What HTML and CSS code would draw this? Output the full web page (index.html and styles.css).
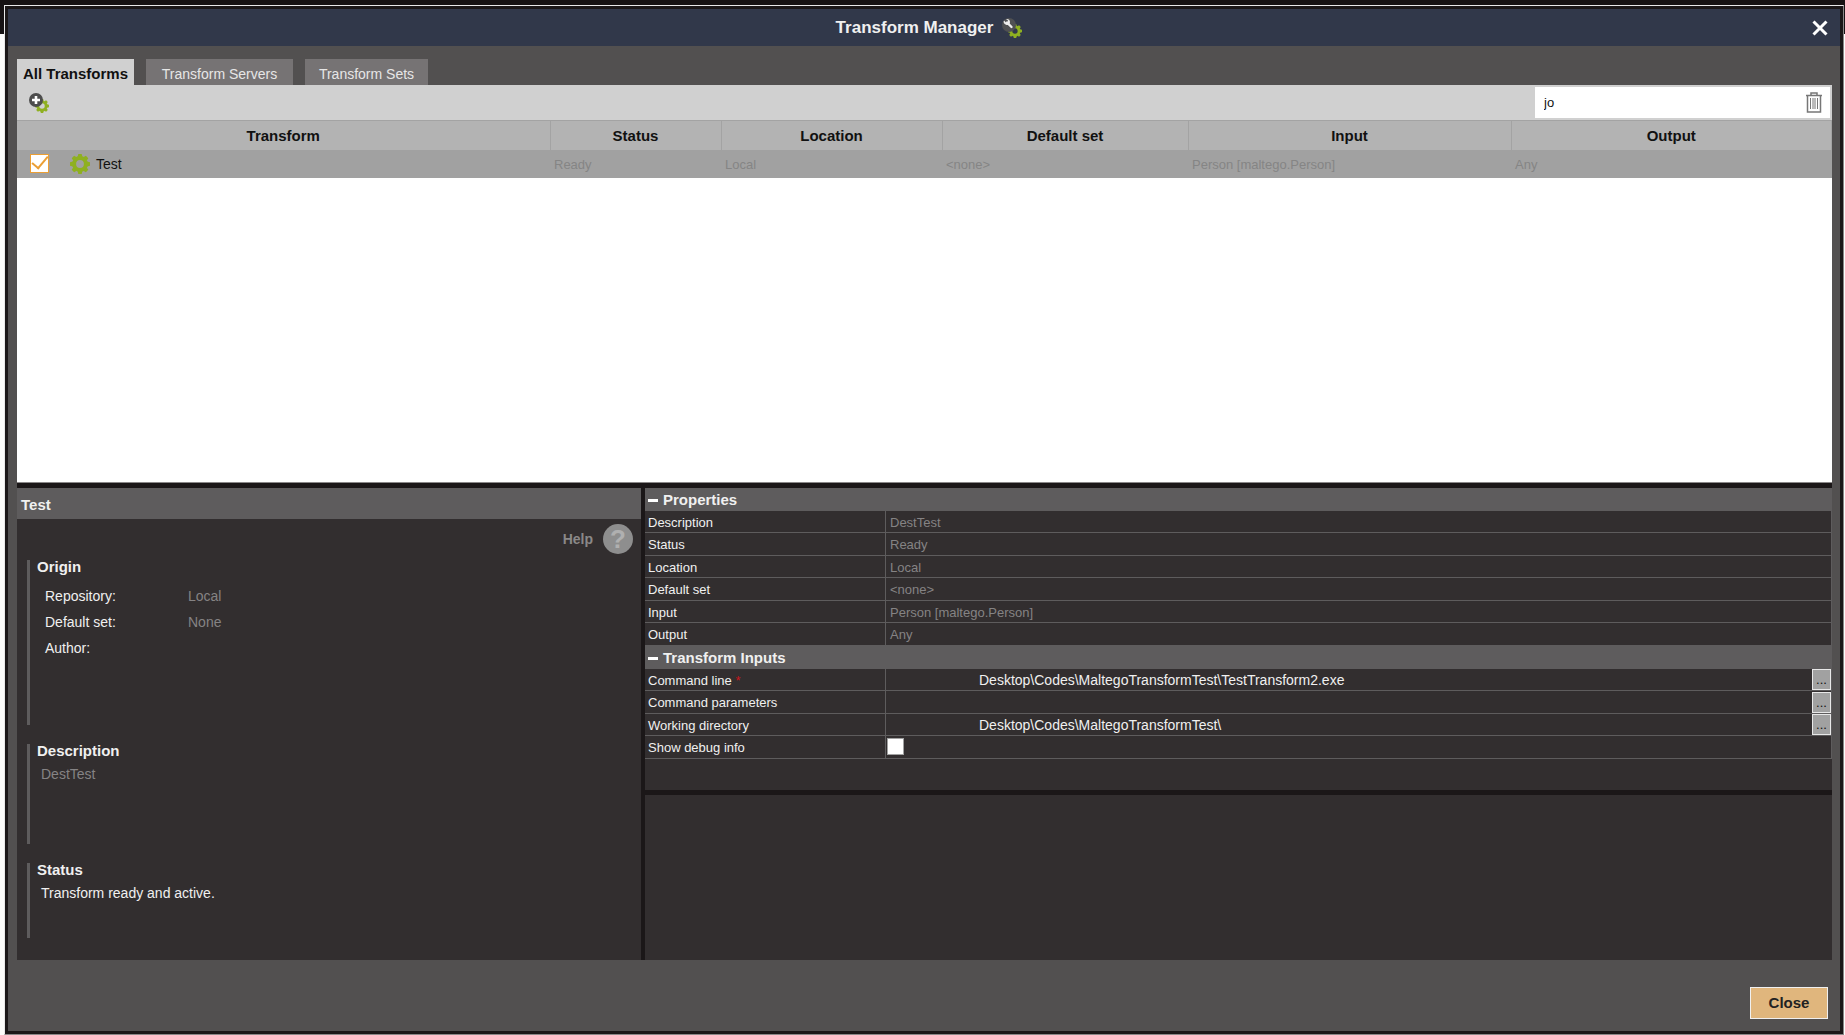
FILE: index.html
```html
<!DOCTYPE html>
<html lang="en">
<head>
<meta charset="utf-8">
<title>Transform Manager</title>
<link rel="stylesheet" href="styles.css">
</head>
<body>
<svg class="defs" aria-hidden="true">
  <symbol id="gear" viewBox="-10 -10 20 20">
    <circle r="5.9" fill="none" stroke="#8fb021" stroke-width="4"/>
    <g fill="#8fb021">
      <path id="teeth" d="M-2.4-7h4.8l-.7-3h-3.4zM-2.4 7h4.8l-.7 3h-3.4zM-7-2.4v4.8l-3-.7v-3.4zM7-2.4v4.8l3-.7v-3.4z"/>
      <use href="#teeth" transform="rotate(45)"/>
    </g>
  </symbol>
</svg>
<main class="window">
  <header class="titlebar">
    <h1 class="title">Transform Manager
      <svg class="icon" viewBox="0 0 20 20" aria-hidden="true">
        <use href="#gear" x="6" y="6" width="14" height="14"/>
        <circle cx="7" cy="7" r="7" fill="#505153"/>
        <path d="M5 4.5l4.500 4.500" stroke="#eee" stroke-width="2.4" stroke-linecap="round"/>
        <path d="M2 2.5l2 2 1.500-.5.5-1.500-2-1.500c2-.5 4 .5 4 3s-2 3.500-4 2.800S1 4 2 2.500z" fill="#eee"/>
      </svg>
    </h1>
    <button class="dismiss" type="button" aria-label="Close window">
      <svg width="16" height="16" viewBox="0 0 16 16"><path d="M1.500 1.500l13 13m0-13l-13 13" stroke="#fff" stroke-width="3"/></svg>
    </button>
  </header>

  <div class="content">
    <nav class="tabs" role="tablist">
      <button class="tab tab-active" type="button" role="tab" aria-selected="true">All Transforms</button>
      <button class="tab tab-servers" type="button" role="tab">Transform Servers</button>
      <button class="tab tab-sets" type="button" role="tab">Transform Sets</button>
    </nav>

    <section class="list">
      <div class="toolbar">
        <button class="add" type="button" aria-label="Add transform">
          <svg class="icon" viewBox="0 0 20 20">
            <use href="#gear" x="6" y="6" width="14" height="14"/>
            <circle cx="7" cy="7" r="7" fill="#4d4d4d"/>
            <path d="M7 3v8M3 7h8" stroke="#fff" stroke-width="2.600"/>
          </svg>
        </button>
        <div class="search">
          <input class="search-input" type="text" value="jo" aria-label="Filter transforms">
          <button class="clear" type="button" aria-label="Clear filter">
            <svg width="16" height="21" viewBox="0 0 16 21" fill="none" stroke="#777">
              <path d="M0 3.500h16" stroke-width="1.500"/><path d="M5 3V1h6v2M1.500 4v16h13V4" stroke-width="1.500"/>
              <path d="M4.500 6v11M7 6v11M9 6v11M11.500 6v11"/>
            </svg>
          </button>
        </div>
      </div>
      <table class="transforms">
        <colgroup><col class="c-name"><col class="c-status"><col class="c-location"><col class="c-set"><col class="c-input"><col></colgroup>
        <thead><tr><th>Transform</th><th>Status</th><th>Location</th><th>Default set</th><th>Input</th><th>Output</th></tr></thead>
        <tbody>
          <tr>
            <td class="name-cell">
              <label class="name">
                <input class="tick" type="checkbox" checked>
                <svg class="gear" aria-hidden="true"><use href="#gear"/></svg>
                Test
              </label>
            </td>
            <td>Ready</td><td>Local</td><td>&lt;none&gt;</td><td>Person [maltego.Person]</td><td>Any</td>
          </tr>
        </tbody>
      </table>
    </section>

    <div class="details">
      <section class="summary">
        <h2 class="summary-title">Test</h2>
        <div class="summary-body">
          <button class="help" type="button">Help <span class="help-mark">?</span></button>
          <section class="block origin">
            <h3 class="block-title">Origin</h3>
            <dl class="facts">
              <dt>Repository:</dt><dd>Local</dd>
              <dt>Default set:</dt><dd>None</dd>
              <dt>Author:</dt><dd></dd>
            </dl>
          </section>
          <section class="block description">
            <h3 class="block-title">Description</h3>
            <p class="block-text muted">DestTest</p>
          </section>
          <section class="block status">
            <h3 class="block-title">Status</h3>
            <p class="block-text">Transform ready and active.</p>
          </section>
        </div>
      </section>

      <div class="side">
        <section class="sheet">
          <h2 class="group">Properties</h2>
          <table class="props">
            <colgroup><col class="c-label"><col></colgroup>
            <tbody>
              <tr><th scope="row">Description</th><td>DestTest</td></tr>
              <tr><th scope="row">Status</th><td>Ready</td></tr>
              <tr><th scope="row">Location</th><td>Local</td></tr>
              <tr><th scope="row">Default set</th><td>&lt;none&gt;</td></tr>
              <tr><th scope="row">Input</th><td>Person [maltego.Person]</td></tr>
              <tr><th scope="row">Output</th><td>Any</td></tr>
            </tbody>
          </table>
          <h2 class="group">Transform Inputs</h2>
          <table class="props">
            <colgroup><col class="c-label"><col></colgroup>
            <tbody>
              <tr><th scope="row"><label for="cmd">Command line <span class="required">*</span></label></th>
                <td class="edit"><div class="field"><input id="cmd" type="text" value="Desktop\Codes\MaltegoTransformTest\TestTransform2.exe"><button type="button" aria-label="Edit command line">...</button></div></td></tr>
              <tr><th scope="row"><label for="params">Command parameters</label></th>
                <td class="edit"><div class="field"><input id="params" type="text"><button type="button" aria-label="Edit command parameters">...</button></div></td></tr>
              <tr><th scope="row"><label for="dir">Working directory</label></th>
                <td class="edit"><div class="field"><input id="dir" type="text" value="Desktop\Codes\MaltegoTransformTest\"><button type="button" aria-label="Edit working directory">...</button></div></td></tr>
              <tr><th scope="row"><label for="debug">Show debug info</label></th>
                <td class="edit"><input id="debug" class="box" type="checkbox"></td></tr>
            </tbody>
          </table>
        </section>
        <section class="notes"></section>
      </div>
    </div>
  </div>

  <footer class="footer"><button class="close" type="button">Close</button></footer>
</main>
</body>
</html>
```
FILE: styles.css
```css
* { box-sizing: border-box; }

body {
  margin: 0;
  padding: 5px 1px 0 4px;
  min-height: 100vh;
  display: flex;
  background: linear-gradient(#161213 34px, #fcfcfb 34px);
  font: 13px/16px "Liberation Sans", Arial, sans-serif;
  color: #f0f0f0;
}

h1, h2, h3, p, dl, dd { margin: 0; }
button, input { font: inherit; color: inherit; }
button { border: 0; padding: 0; background: none; }
.defs { position: absolute; width: 0; height: 0; }
.icon { display: block; width: 20px; height: 20px; }

.window {
  flex: 1;
  min-width: 0;
  display: flex;
  flex-direction: column;
  background: #525050;
  border: 1px solid #e8e8e8;
  border-right-color: #8a8888;
  border-bottom-color: #8a8888;
  outline: 3px solid #1b1718;
  outline-offset: -4px;
  padding: 3px;
}

.titlebar {
  display: grid;
  grid-template-columns: 1fr auto 1fr;
  align-items: center;
  height: 37px;
  background: #31384a;
}
.title {
  grid-column: 2;
  display: flex;
  align-items: center;
  gap: 9px;
  padding-left: 10px;
  font-size: 17px;
  line-height: 20px;
}
.dismiss { justify-self: end; margin-right: 12px; height: 16px; }
.dismiss svg { display: block; }

.content {
  flex: 1;
  display: flex;
  flex-direction: column;
  padding: 13px 8px 0 9px;
}

.tabs { display: flex; gap: 12px; }
.tab {
  height: 26px;
  padding-top: 4px;
  background: #767374;
  color: #e6e6e6;
  font-size: 14px;
}
.tab-active { width: 117px; background: #d0d0d0; color: #111; font-size: 15px; font-weight: bold; white-space: nowrap; }
.tab-servers { width: 147px; }
.tab-sets { width: 123px; }

.list {
  flex: 1;
  min-height: 200px;
  background: #fff;
  border-bottom: 1px solid #8a8888;
}
.toolbar {
  display: flex;
  align-items: center;
  justify-content: space-between;
  height: 35px;
  padding: 0 2px 0 12px;
  background: #d0d0d0;
}
.search {
  display: flex;
  align-items: center;
  width: 295px;
  height: 31px;
  padding: 0 8px;
  background: #fff;
  color: #111;
}
.search-input { flex: 1; min-width: 0; border: 0; padding: 0 1px; background: none; outline: 0; }
.clear svg { display: block; }

.transforms { width: 100%; table-layout: fixed; border-collapse: collapse; }
.c-name { width: 533px; }
.c-status { width: 171px; }
.c-location { width: 221px; }
.c-set { width: 246px; }
.c-input { width: 323px; }
.transforms th {
  height: 29px;
  padding: 1px 0 0;
  background: #b3b3b3;
  border: 0 solid #a3a3a3;
  border-width: 1px 1px 0 0;
  color: #111;
  font-size: 15px;
}
.transforms td { height: 28px; padding: 2px 0 0 4px; background: #a1a1a1; color: #858585; }
.transforms .name-cell { padding: 0 0 0 13px; }
.name { display: flex; align-items: center; color: #111; font-size: 14px; }
.tick {
  appearance: none;
  width: 19px;
  height: 19px;
  margin: 0 21px 0 0;
  border: 1px solid #eb9f35;
  background: #fff;
  display: grid;
  place-items: center;
}
.tick::before {
  content: "";
  width: 14px;
  height: 7px;
  margin-top: -7px;
  border: solid #eb9f35;
  border-width: 0 0 2px 2px;
  transform: rotate(-50deg);
}
.gear { width: 20px; height: 20px; margin-right: 6px; }

.details {
  display: grid;
  grid-template-columns: 624px 1fr;
  gap: 4px;
  padding-top: 5px;
  background: #1b1718;
}
.summary { background: #322e2f; }
.summary-title {
  height: 31px;
  padding: 1px 0 0 4px;
  background: #5e5c5d;
  font-size: 15px;
  line-height: 31px;
}
.summary-body { display: flex; flex-direction: column; padding: 5px 8px 21px 10px; }
.help {
  align-self: end;
  display: flex;
  align-items: center;
  gap: 10px;
  height: 30px;
  color: #8a8888;
  font-size: 14px;
  font-weight: bold;
}
.help-mark {
  width: 30px;
  height: 30px;
  border-radius: 50%;
  background: #8e8e8e;
  color: #b0b0b0;
  font-size: 26px;
  line-height: 31px;
}
.block { border-left: 3px solid #5e5c5d; padding: 0 7px; margin-top: 19px; }
.origin { min-height: 165px; margin-top: 6px; }
.description { min-height: 100px; }
.status { min-height: 75px; }
.block-title { font-size: 15px; line-height: 13px; }
.block-text { padding: 9px 4px 0; font-size: 14px; }
.muted, .facts dd { color: #858384; }
.facts {
  display: grid;
  grid-template-columns: 143px 1fr;
  padding: 10px 0 0 8px;
  font-size: 14px;
  line-height: 26px;
}

.side { display: flex; flex-direction: column; gap: 5px; min-width: 0; }
.sheet { min-height: 302px; background: #322e2f; }
.notes { flex: 1; min-height: 165px; background: #322e2f; }
.group {
  display: flex;
  align-items: center;
  gap: 5px;
  height: 23px;
  padding: 1px 0 0 3px;
  background: #5e5c5d;
  font-size: 15px;
}
.group::before { content: ""; width: 10px; height: 3px; background: #fff; }
.props { width: 100%; table-layout: fixed; border-spacing: 0; }
.c-label { width: 241px; }
.props tr { height: 23px; }
.props tr:nth-child(odd) { height: 22px; }
.props th, .props td {
  padding: 2px 3px 0;
  border: 0 solid #5e5c5d;
  border-width: 0 1px 1px 0;
  text-align: left;
  font-weight: normal;
}
.props td { padding-left: 4px; color: #858384; }
.props .edit { padding: 0; color: #f0f0f0; }
.required { color: #c8161d; }
.field { display: flex; height: 21px; }
.field input {
  flex: 1;
  min-width: 0;
  border: 0;
  padding: 1px 0 0 93px;
  background: none;
  outline: 0;
  font-size: 14px;
}
.field button { width: 19px; border: 1px solid #e8e8e8; background: #a1a1a1; color: #111; line-height: 19px; }
.box {
  appearance: none;
  display: block;
  width: 17px;
  height: 17px;
  margin: 0 1px 2px;
  border: 1px solid #a1a1a1;
  background: #fff;
}

.footer { display: flex; justify-content: end; height: 71px; padding: 27px 12px 0 0; }
.close {
  width: 78px;
  height: 32px;
  border: 1px solid #f0f0f0;
  background: #e0b67d;
  color: #222;
  font-size: 15px;
  font-weight: bold;
}
```
